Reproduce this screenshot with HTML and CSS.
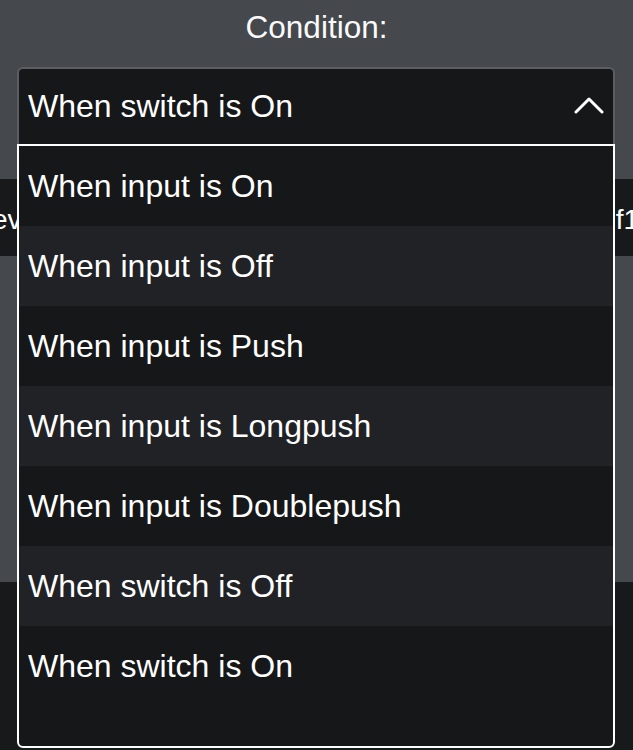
FILE: index.html
```html
<!DOCTYPE html>
<html>
<head>
<meta charset="utf-8">
<link rel="stylesheet" href="styles.css">
</head>
<body>
<div class="page">
  <div class="label">Condition:</div>
  <div class="field">
    <div class="select">
      <span class="select-value">When switch is On</span>
      <svg class="chevron" width="30" height="18" viewBox="0 0 30 18"><polyline points="2,15 15,2 28,15" fill="none" stroke="#fff" stroke-width="3" stroke-linecap="round" stroke-linejoin="round"/></svg>
    </div>
    <div class="menu">
      <div class="opt">When input is On</div>
      <div class="opt alt">When input is Off</div>
      <div class="opt">When input is Push</div>
      <div class="opt alt">When input is Longpush</div>
      <div class="opt">When input is Doublepush</div>
      <div class="opt alt">When switch is Off</div>
      <div class="opt">When switch is On</div>
    </div>
  </div>
  <div class="gap"></div>
  <div class="band">
    <span class="band-left">ev</span>
    <span class="band-right">f1</span>
  </div>
  <div class="mid"></div>
  <div class="footer"></div>
</div>
</body>
</html>
```

FILE: styles.css
```css
html, body {
  margin: 0;
  padding: 0;
}
body {
  background: #45484d;
  font-family: "Liberation Sans", Arial, sans-serif;
  color: #fff;
  width: 633px;
  height: 750px;
  overflow: hidden;
}
.page {
  display: flex;
  flex-direction: column;
  height: 750px;
}
.label {
  height: 67px;
  box-sizing: border-box;
  padding-top: 8px;
  line-height: 38px;
  font-size: 31.5px;
  text-align: center;
  color: #fafafa;
}
.field {
  position: relative;
  margin: 0 18px 0 17px;
  z-index: 2;
}
.select {
  height: 79px;
  box-sizing: border-box;
  background: #161719;
  border: 2px solid #5a5d62;
  border-bottom: none;
  border-radius: 6px 6px 0 0;
  display: flex;
  align-items: center;
  justify-content: space-between;
  padding: 0 9px 4px 9px;
  font-size: 32px;
}
.select-value {
  line-height: 40px;
}
.chevron {
  display: block;
  margin-top: 0;
}
.menu {
  position: absolute;
  top: 77px;
  left: 0;
  right: 0;
  height: 604px;
  box-sizing: border-box;
  background: #161719;
  border: 2px solid #ffffff;
  border-radius: 0 0 6px 6px;
  overflow: hidden;
}
.opt {
  height: 80px;
  line-height: 80px;
  padding-left: 9px;
  font-size: 32px;
  background: #161719;
}
.opt.alt {
  background: #212226;
}
.gap {
  height: 33px;
}
.band {
  height: 77px;
  background: #18191b;
  display: flex;
  justify-content: space-between;
  align-items: center;
  font-size: 28px;
  overflow: hidden;
  padding-top: 4px;
  box-sizing: border-box;
}
.band-left {
  margin-left: -8px;
}
.band-right {
  margin-right: -6px;
}
.mid {
  height: 326px;
}
.footer {
  flex: 1;
  background: #18191b;
}
```
